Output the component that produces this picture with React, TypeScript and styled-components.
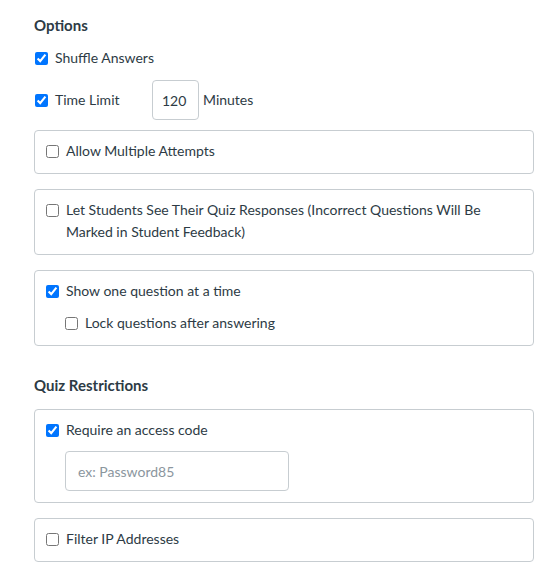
import styled, { createGlobalStyle } from "styled-components";

const GlobalStyle = createGlobalStyle`
  body {
    margin: 0;
    background: #ffffff;
    font-family: Lato, "Noto Sans", sans-serif;
    color: #2d3b45;
  }
`;

const Page = styled.div`
  width: 500px;
  padding: 14px 26px 18px 34px;
  display: flex;
  flex-direction: column;
`;

const Heading = styled.h3<{ $top?: number; $bottom: number }>`
  margin: ${({ $top }) => $top || 0}px 0 ${({ $bottom }) => $bottom}px;
  font-size: 15px;
  font-weight: 700;
  line-height: 22px;
`;

const Row = styled.label<{ $indent?: number }>`
  display: flex;
  align-items: center;
  gap: 7px;
  min-height: 22px;
  font-size: 14px;
  line-height: 22px;
  padding-left: ${({ $indent }) => $indent || 0}px;
  cursor: pointer;
`;

const Check = styled.input.attrs({ type: "checkbox" })`
  width: 13px;
  height: 13px;
  margin: 5px 0 0;
  flex: none;
  accent-color: #0075ff;
  align-self: flex-start;
`;

const Plain = styled.div`
  display: flex;
  flex-direction: column;
  gap: 11px;
  padding-left: 1px;
  margin-bottom: 10px;
`;

const TimeRow = styled.div`
  display: flex;
  align-items: center;
`;

const TimeLabel = styled(Row)`
  width: 117px;
`;

const NumberInput = styled.input`
  box-sizing: border-box;
  width: 47px;
  height: 40px;
  padding: 0 9px;
  border: 1px solid #c7cdd1;
  border-radius: 4px;
  font: 14px Lato, "Noto Sans", sans-serif;
  color: #2d3b45;
  outline: none;
`;

const Unit = styled.span`
  margin: 0 0 2px 4px;
  font-size: 14px;
`;

const List = styled.div`
  display: flex;
  flex-direction: column;
  gap: 15px;
`;

const Card = styled.div`
  border: 1px solid #c7cdd1;
  border-radius: 4px;
  padding: 9px 11px 11px;
  display: flex;
  flex-direction: column;
  gap: 10px;
`;

const TextInput = styled.input`
  box-sizing: border-box;
  width: 224px;
  height: 40px;
  margin-left: 19px;
  padding: 0 12px;
  border: 1px solid #c7cdd1;
  border-radius: 4px;
  font: 14px Lato, "Noto Sans", sans-serif;
  color: #2d3b45;
  outline: none;
  &::placeholder {
    color: #8b969e;
  }
`;

export default function App() {
  return (
    <Page>
      <GlobalStyle />
      <Heading $bottom={11}>Options</Heading>
      <Plain>
        <Row>
          <Check defaultChecked />
          Shuffle Answers
        </Row>
        <TimeRow>
          <TimeLabel>
            <Check defaultChecked />
            Time Limit
          </TimeLabel>
          <NumberInput defaultValue="120" />
          <Unit>Minutes</Unit>
        </TimeRow>
      </Plain>
      <List>
        <Card>
          <Row>
            <Check />
            Allow Multiple Attempts
          </Row>
        </Card>
        <Card>
          <Row>
            <Check />
            Let Students See Their Quiz Responses (Incorrect Questions Will Be Marked in Student Feedback)
          </Row>
        </Card>
        <Card>
          <Row>
            <Check defaultChecked />
            Show one question at a time
          </Row>
          <Row $indent={19}>
            <Check />
            Lock questions after answering
          </Row>
        </Card>
      </List>
      <Heading $top={28} $bottom={13}>Quiz Restrictions</Heading>
      <List>
        <Card>
          <Row>
            <Check defaultChecked />
            Require an access code
          </Row>
          <TextInput placeholder="ex: Password85" />
        </Card>
        <Card>
          <Row>
            <Check />
            Filter IP Addresses
          </Row>
        </Card>
      </List>
    </Page>
  );
}
